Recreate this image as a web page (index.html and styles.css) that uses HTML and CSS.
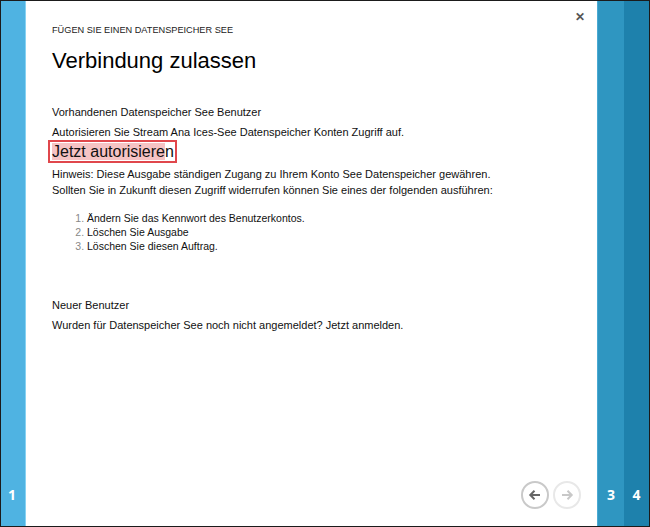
FILE: index.html
```html
<!DOCTYPE html>
<html lang="de">
<head>
<meta charset="utf-8">
<link rel="stylesheet" href="styles.css">
</head>
<body>
<div class="frame">
  <div class="step step-1"><span class="num">1</span></div>
  <div class="main">
    <div class="close">&#x2715;</div>
    <div class="kicker">FÜGEN SIE EINEN DATENSPEICHER SEE</div>
    <h1 class="title">Verbindung zulassen</h1>
    <div class="section">
      <p class="line">Vorhandenen Datenspeicher See Benutzer</p>
      <p class="line l2">Autorisieren Sie Stream Ana Ices-See Datenspeicher Konten Zugriff auf.</p>
      <div class="auth"><span class="hl">Jetzt autorisiere</span>n</div>
      <p class="line l3">Hinweis: Diese Ausgabe ständigen Zugang zu Ihrem Konto See Datenspeicher gewähren.</p>
      <p class="line">Sollten Sie in Zukunft diesen Zugriff widerrufen können Sie eines der folgenden ausführen:</p>
      <ol class="steps">
        <li>Ändern Sie das Kennwort des Benutzerkontos.</li>
        <li>Löschen Sie Ausgabe</li>
        <li>Löschen Sie diesen Auftrag.</li>
      </ol>
    </div>
    <div class="section new">
      <p class="line">Neuer Benutzer</p>
      <p class="line l5">Wurden für Datenspeicher See noch nicht angemeldet? Jetzt anmelden.</p>
    </div>
    <div class="nav">
      <span class="circ back"><svg width="14" height="14" viewBox="0 0 14 14"><path d="M12 7H2.5M6.5 2.8L2.3 7l4.2 4.2" fill="none" stroke="#666" stroke-width="2"/></svg></span>
      <span class="circ fwd"><svg width="14" height="14" viewBox="0 0 14 14"><path d="M2 7h9.5M7.5 2.8L11.7 7l-4.2 4.2" fill="none" stroke="#c8c8c8" stroke-width="2"/></svg></span>
    </div>
  </div>
  <div class="step step-3"><span class="num">3</span></div>
  <div class="step step-4"><span class="num">4</span></div>
</div>
</body>
</html>
```
FILE: styles.css
```css
html, body { margin: 0; padding: 0; background: #fff; }
.frame {
  width: 650px; height: 527px; box-sizing: border-box;
  border: 1px solid #1b1b1b;
  display: flex;
  font-family: "Liberation Sans", Arial, sans-serif;
  color: #111;
}
.step {
  display: flex; flex-direction: column; justify-content: flex-end;
  align-items: center; box-sizing: border-box;
}
.num { color: #fff; font-family: "Open Sans", sans-serif; font-weight: 700; font-size: 14px; margin-bottom: 22px; }
.step-1 { width: 25px; background: #4fb3e2; border-right: 1px solid #86d2f3; align-items: flex-start; padding-left: 7px; }
.step-3 { width: 27px; background: #2f96c1; border-left: 1px solid #4aaad3; }
.step-4 { width: 25px; background: #1e81ac; }
.main { width: 571px; position: relative; padding: 0 26px; box-sizing: border-box; }
.close { position: absolute; right: 12px; top: 9px; font-size: 12px; font-weight: 700; color: #555; }
.kicker { font-size: 9.2px; margin-top: 24px; color: #222; }
.title { font-weight: 400; font-size: 22px; margin: 13px 0 0; color: #000; }
.section { margin-top: 30px; }
.line { margin: 0; font-size: 11px; line-height: 16px; color: #111; }
.l2 { margin-top: 4px; }
.auth {
  width: fit-content; margin: 0 0 0 -4px; padding: 1px 1px 0 2px;
  border: 2px solid #e0474c; background: #fff;
  font-size: 16px; line-height: 18px; color: #111;
}
.hl { background: #f6c3c4; }
.l3 { margin-top: 3px; }
.steps { margin: 13px 0 0; padding-left: 35px; font-size: 10.5px; line-height: 14px; }
.steps li::marker { color: #888; }
.new { margin-top: 44px; }
.l5 { margin-top: 4px; }
.nav { position: absolute; right: 16px; bottom: 17px; display: flex; gap: 4px; }
.circ {
  width: 24px; height: 24px; border-radius: 50%; display: flex; align-items: center; justify-content: center;
}
.back { border: 2px solid #c9c9c9; }
.fwd { border: 2px solid #e8e8e8; }
```
